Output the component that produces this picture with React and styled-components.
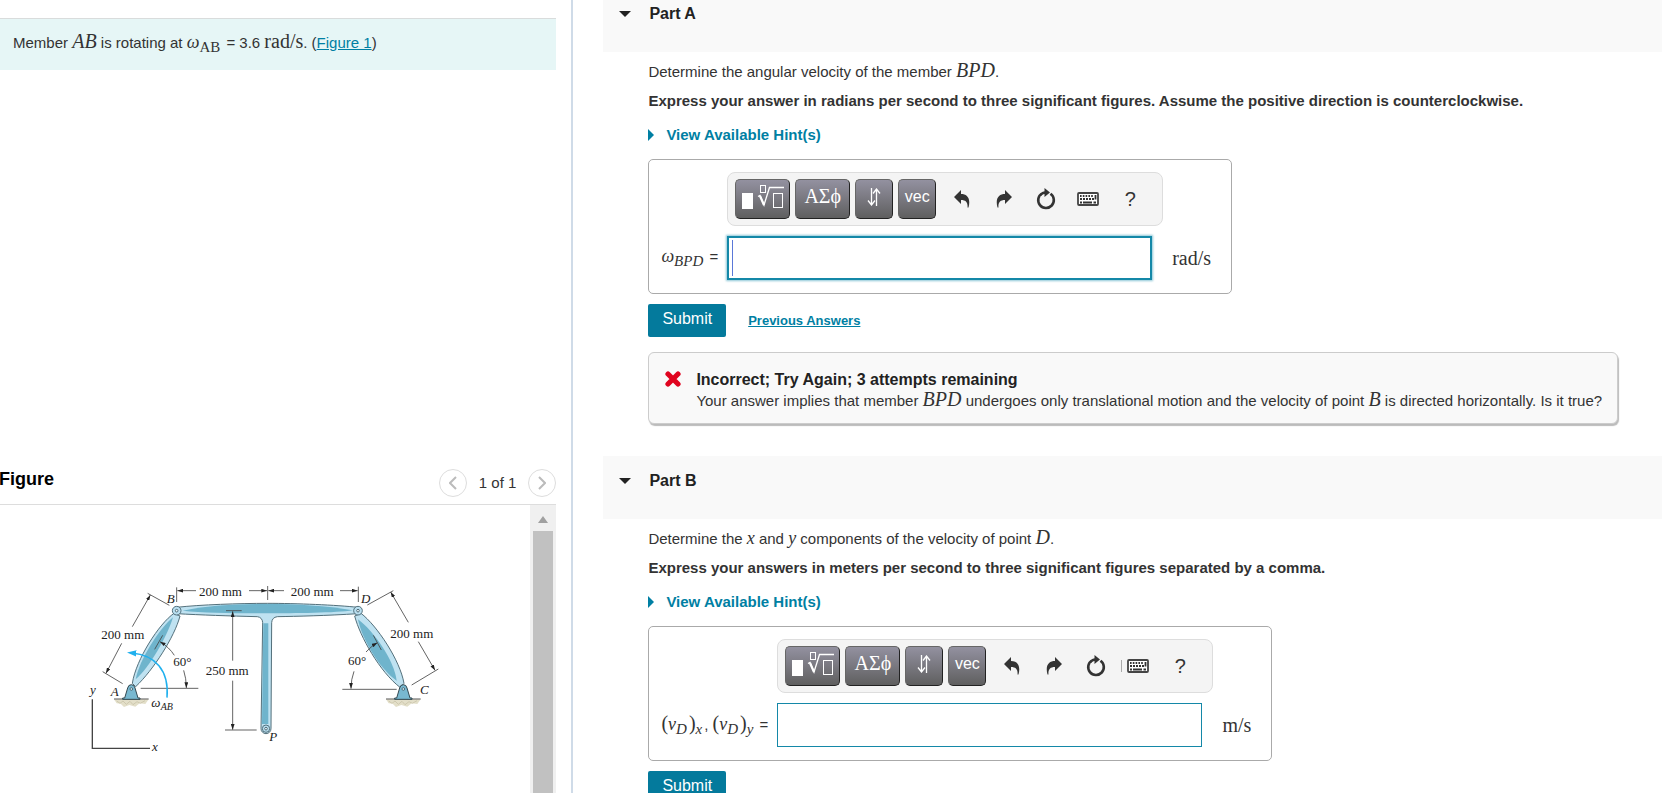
import React, { useState } from "react";
import styled, { createGlobalStyle, css } from "styled-components";

const SANS = `"Liberation Sans", Arial, sans-serif`;
const SERIF = `"Liberation Serif", "Times New Roman", serif`;

const App = () => {
  return (
    <>
      <GlobalStyle />
      <Page>
        <LeftPane>
          <Intro>
            Member <Var>AB</Var> is rotating at <Var $low>ω</Var>
            <Sub $roman>AB</Sub> = 3.6 <Unit>rad/s</Unit>. (
            <a href="#figure">Figure 1</a>)
          </Intro>
          <FigurePanel />
        </LeftPane>
        <RightPane>
          <Part title="Part A">
            <Question>
              Determine the angular velocity of the member <Var>BPD</Var>.
            </Question>
            <Instructions>
              Express your answer in radians per second to three significant
              figures. Assume the positive direction is counterclockwise.
            </Instructions>
            <Hints />
            <Answer
              id="answer-a"
              focused
              unit="rad/s"
              label={
                <>
                  <Var $low>ω</Var>
                  <Sub>BPD</Sub> =
                </>
              }
            />
            <Actions>
              <SubmitButton type="submit">Submit</SubmitButton>
              <PreviousLink href="#previous">Previous Answers</PreviousLink>
            </Actions>
            <Feedback>
              <CrossIcon />
              <div>
                <FeedbackTitle>
                  Incorrect; Try Again; 3 attempts remaining
                </FeedbackTitle>
                <FeedbackText>
                  Your answer implies that member <Var>BPD</Var> undergoes only
                  translational motion and the velocity of point <Var>B</Var> is
                  directed horizontally. Is it true?
                </FeedbackText>
              </div>
            </Feedback>
          </Part>
          <Part title="Part B">
            <Question>
              Determine the <Var $low>x</Var> and <Var $low>y</Var> components
              of the velocity of point <Var>D</Var>.
            </Question>
            <Instructions>
              Express your answers in meters per second to three significant
              figures separated by a comma.
            </Instructions>
            <Hints />
            <Answer
              id="answer-b"
              unit="m/s"
              divider
              label={
                <>
                  <Unit>(</Unit>
                  <Var $low>v</Var>
                  <Sub>D</Sub>
                  <Unit>)</Unit>
                  <Sub>x</Sub>, <Unit>(</Unit>
                  <Var $low>v</Var>
                  <Sub>D</Sub>
                  <Unit>)</Unit>
                  <Sub>y</Sub> =
                </>
              }
            />
            <Actions>
              <SubmitButton type="submit">Submit</SubmitButton>
            </Actions>
          </Part>
        </RightPane>
      </Page>
    </>
  );
};

export default App;

const Part = ({ title, children }) => {
  const [open, setOpen] = useState(true);
  return (
    <section>
      <PartHeader>
        <PartToggle aria-expanded={open} onClick={() => setOpen(!open)}>
          <svg width="12" height="6" viewBox="0 0 12 6" aria-hidden="true">
            <path d="M0 0H12L6 6Z" fill="#222" />
          </svg>
          {title}
        </PartToggle>
      </PartHeader>
      {open && <PartBody>{children}</PartBody>}
    </section>
  );
};

const Hints = () => (
  <HintButton>
    <svg width="6" height="12" viewBox="0 0 6 12" aria-hidden="true">
      <path d="M0 0L6 6L0 12Z" fill="#007fa3" />
    </svg>
    View Available Hint(s)
  </HintButton>
);

const Answer = ({ id, label, unit, focused, divider }) => (
  <AnswerBox>
    <Toolbar>
      <KeyButton aria-label="Templates" $wide>
        <TemplateIcon />
      </KeyButton>
      <KeyButton aria-label="Symbols" $wide $serif>
        ΑΣϕ
      </KeyButton>
      <KeyButton aria-label="Arrows">
        <ArrowsIcon />
      </KeyButton>
      <KeyButton>vec</KeyButton>
      <ToolButton aria-label="Undo">
        <CurvedArrow />
      </ToolButton>
      <ToolButton aria-label="Redo">
        <CurvedArrow flip />
      </ToolButton>
      <ToolButton aria-label="Reset">
        <ResetIcon />
      </ToolButton>
      <ToolButton aria-label="Keyboard shortcuts">
        {divider && <Divider />}
        <KeyboardIcon />
      </ToolButton>
      <ToolButton aria-label="Help">?</ToolButton>
    </Toolbar>
    <AnswerLabel htmlFor={id}>{label}</AnswerLabel>
    <AnswerField $focused={focused}>
      {focused && <Caret />}
      <AnswerInput id={id} type="text" />
    </AnswerField>
    <AnswerUnit>{unit}</AnswerUnit>
  </AnswerBox>
);

const FigurePanel = () => (
  <FigureSection id="figure">
    <FigureHeader>
      <FigureTitle>Figure</FigureTitle>
      <Pager>
        <RoundButton aria-label="Previous figure">
          <svg width="8" height="14" viewBox="0 0 8 14">
            <path d="M7 1L1 7L7 13" fill="none" stroke="#bbb" strokeWidth="2" />
          </svg>
        </RoundButton>
        1 of 1
        <RoundButton aria-label="Next figure">
          <svg width="8" height="14" viewBox="0 0 8 14">
            <path d="M1 1L7 7L1 13" fill="none" stroke="#bbb" strokeWidth="2" />
          </svg>
        </RoundButton>
      </Pager>
    </FigureHeader>
    <FigureScroll>
      <FigureCanvas>
        <Linkage />
      </FigureCanvas>
      <ScrollTrack>
        <svg width="10" height="7" viewBox="0 0 10 7" aria-hidden="true">
          <path d="M0 7L5 0L10 7Z" fill="#a0a0a0" />
        </svg>
        <ScrollThumb />
      </ScrollTrack>
    </FigureScroll>
  </FigureSection>
);

const TemplateIcon = () => (
  <svg width="42" height="26" viewBox="0 0 42 26" aria-hidden="true">
    <rect x="0" y="9" width="11" height="16" fill="#fff" />
    <g fill="none" stroke="#fff">
      <rect x="18.5" y="1.5" width="5" height="7" />
      <path d="M16 12.5L18 11.5L22 21L27.5 3.5H42" strokeWidth="1.3" />
      <path d="M18 12L22 21" strokeWidth="2.2" />
      <rect x="31.5" y="9.5" width="9" height="14" />
    </g>
  </svg>
);

const ArrowsIcon = () => (
  <svg width="16" height="18" viewBox="0 0 16 18" aria-hidden="true">
    <g fill="none" stroke="#fff" strokeWidth="1.3">
      <path d="M5.500 0V17M2 12.5L5.500 17L9 12.5" />
      <path d="M10.500 18V1M7 5.5L10.500 1L14 5.5" />
    </g>
  </svg>
);

const CurvedArrow = ({ flip }) => (
  <svg width="16" height="18" viewBox="0 0 16 18" aria-hidden="true">
    <path
      d="M0 7L7 0V4C13 4 17 8 14.500 17.500H13.500C14 12.500 12 10 7 10V14Z"
      fill="#333"
      transform={flip ? "translate(16 0) scale(-1 1)" : undefined}
    />
  </svg>
);

const ResetIcon = () => (
  <svg width="20" height="22" viewBox="0 0 20 22" aria-hidden="true">
    <path
      d="M6 5.500A7.800 7.800 0 1 0 14.500 5.800"
      fill="none"
      stroke="#333"
      strokeWidth="2.6"
    />
    <path d="M8.500 0L14 4.500L8.500 9V6Q6.500 6 5 8L4 6Q6 3.500 8.500 3.300Z" fill="#333" />
  </svg>
);

const KeyboardIcon = () => (
  <svg width="22" height="14" viewBox="0 0 22 14" aria-hidden="true">
    <rect x="1" y="1" width="20" height="12" rx="1" fill="#fff" stroke="#444" strokeWidth="1.8" />
    <g stroke="#333" strokeWidth="1.8">
      <path d="M3 4H17" strokeDasharray="1.6 1.2" />
      <path d="M3 7H17" strokeDasharray="2 1" />
      <path d="M3 10.500H5M6 10.500H15M16.500 10.500H19M18.500 3V7.500" />
    </g>
  </svg>
);

const CrossIcon = () => (
  <svg width="16" height="16" viewBox="0 0 16 16" aria-label="Incorrect">
    <path d="M3 3L13 13M13 3L3 13" stroke="#e0041f" strokeWidth="5.2" strokeLinecap="round" />
  </svg>
);

const Pin = ({ x, y, r = 11 }) => (
  <g fill="#b9dff0" stroke="#3d5a66" strokeWidth="2.5">
    <circle cx={x} cy={y} r={r} />
    <circle cx={x} cy={y} r="4" fill="#eef8fb" />
  </g>
);

const Support = ({ x }) => (
  <g>
    <path
      d={`M${x - 52} 388H${x + 52}L${x + 42} 402L${x + 25} 400L${x + 12} 410L${x - 6} 405L${x - 22} 411L${x - 32} 401L${x - 44} 400Z`}
      fill="#e3dfc9"
    />
    <path
      d={`M${x - 44} 393l10 7l9 -7l10 10l11 -9l9 10l12 -9l10 5l14 -8`}
      fill="none"
      stroke="#c3bda2"
      strokeWidth="2"
    />
    <path d={`M${x - 52} 387H${x + 52}`} stroke="#555" strokeWidth="3" />
    <path
      d={`M${x - 20} 384L${x - 11} 354Q${x - 9} 344 ${x} 344Q${x + 9} 344 ${x + 11} 354L${x + 20} 384H${x + 26}V388H${x - 26}V384Z`}
      fill="#78b8d0"
      stroke="#334850"
      strokeWidth="3"
    />
    <circle cx={x} cy="357" r="4" fill="#cdeaf4" stroke="#334850" strokeWidth="2" />
  </g>
);

// B-D beam with its P stem, carried by links AB and CD
const Linkage = () => (
  <FigureSvg viewBox="0 0 1110 570" role="img" aria-label="Linkage diagram">
    <defs>
      <marker id="tip" viewBox="0 0 12 8" refX="12" refY="4" markerWidth="17" markerHeight="12" markerUnits="userSpaceOnUse" orient="auto">
        <path d="M0 0L12 4L0 8Z" fill="#222" />
      </marker>
      <marker id="blueTip" viewBox="0 0 12 8" refX="6" refY="4" markerWidth="28" markerHeight="19" markerUnits="userSpaceOnUse" orient="auto">
        <path d="M0 0L12 4L0 8Z" fill="#1fb0ee" />
      </marker>
    </defs>

    <Member d="M157 340C168 268 238 160 282 130L300 138C284 200 220 300 167 350Z" />
    <Core d="M167 328C178 270 236 178 279 142C262 200 206 296 167 328Z" />
    <Member d="M824 138C840 200 900 306 960 352L972 340C960 270 890 166 843 130Z" />
    <Core d="M834 148C844 204 900 300 950 332C942 270 882 184 834 148Z" />
    <Member d="M290 112C360 104 480 100 562 100C650 100 770 105 834 112V131C740 137 650 139 592 140Q576 142 575 158L573 476A15 15 0 0 1 543 476L548 158Q547 142 532 140C450 138 360 135 290 131Z" />
    <Core d="M308 122C390 105 480 102 562 102C650 102 740 107 818 121C770 129 640 130 562 130C480 130 370 129 308 122Z" />
    <Core d="M550 160H565V462H546Z" />
    <Support x={154} />
    <Support x={970} />
    <Pin x={290} y={122} r={13} />
    <Pin x={834} y={122} r={13} />
    <Pin x={558} y={476} />

    <Thin d="M290 52V96M563 48V90M835 50V96M203 70L268 106M68 305L128 341M182 355H355" />
    <Thin d="M438 122H485M435 480H530M248 196L224 238M862 105L940 62M995 345L1075 297M787 358H950M880 196L904 240" />
    <Arrow d="M348 62H292" />
    <Arrow d="M507 62H561" />
    <Arrow d="M612 62H565" />
    <Arrow d="M780 62H833" />
    <Arrow d="M157 170L211 75" />
    <Arrow d="M125 220L78 310" />
    <Arrow d="M283 256Q268 232 240 215" />
    <Arrow d="M311 301Q319 325 319 354" />
    <Arrow d="M458 272V124" />
    <Arrow d="M458 332V479" />
    <Arrow d="M985 157L932 66" />
    <Arrow d="M1015 215L1065 301" />
    <Arrow d="M858 246Q872 230 892 218" />
    <Arrow d="M822 304Q813 328 813 356" />
    <path d="M261 383C268 300 225 255 155 249" fill="none" stroke="#1fb0ee" strokeWidth="4.5" markerEnd="url(#blueTip)" />
    <path d="M37 388V535H210" fill="none" stroke="#444" strokeWidth="4" />

    <Dim x="357" y="77">200 mm</Dim>
    <Dim x="632" y="77">200 mm</Dim>
    <Dim x="64" y="207">200 mm</Dim>
    <Dim x="931" y="205">200 mm</Dim>
    <Dim x="377" y="315">250 mm</Dim>
    <Dim x="280" y="287">60°</Dim>
    <Dim x="804" y="285">60°</Dim>
    <Dim $italic x="92" y="379">A</Dim>
    <Dim $italic x="260" y="98">B</Dim>
    <Dim $italic x="1020" y="373">C</Dim>
    <Dim $italic x="843" y="98">D</Dim>
    <Dim $italic x="568" y="514">P</Dim>
    <Dim $italic x="30" y="372">y</Dim>
    <Dim $italic x="216" y="544">x</Dim>
    <Dim $italic x="214" y="412">ω</Dim>
    <Dim $italic $small x="242" y="420">AB</Dim>
  </FigureSvg>
);

const GlobalStyle = createGlobalStyle`
  * {
    box-sizing: border-box;
  }
  body {
    margin: 0;
    background: #fff;
    color: #333;
    font-family: ${SANS};
    font-size: 15px;
  }
  a {
    color: #007fa3;
  }
  button {
    font-family: inherit;
    cursor: pointer;
  }
  svg {
    display: block;
    flex-shrink: 0;
  }
`;

const Page = styled.main`
  display: flex;
  height: 100vh;
  overflow: hidden;
`;

const LeftPane = styled.div`
  display: flex;
  flex: 0 0 34.5%;
  flex-direction: column;
  justify-content: space-between;
  padding: 18px 15px 0 0;
  border-right: 2px solid #cfdbe8;
`;

const RightPane = styled.div`
  flex: 1;
  min-width: 0;
  margin-top: -11px;
  padding-left: 30px;
`;

const Intro = styled.p`
  margin: 0;
  height: 52px;
  padding: 0 13px;
  border-top: 1px solid #d9dcdc;
  background: #e6f6f6;
  line-height: 48px;
`;

const Var = styled.i`
  font-family: ${SERIF};
  font-size: ${({ $low }) => ($low ? 18 : 20)}px;
  line-height: 1;
`;

const Unit = styled.span`
  font-family: ${SERIF};
  font-size: 20px;
  line-height: 1;
`;

const Sub = styled.sub`
  padding-right: 2px;
  font-family: ${SERIF};
  font-size: 15px;
  font-style: ${({ $roman }) => ($roman ? "normal" : "italic")};
  line-height: 1;
`;

const PartHeader = styled.h2`
  margin: 0;
  height: 63px;
  padding: 16px;
  background: #f9f9f9;
`;

const PartToggle = styled.button`
  display: flex;
  align-items: center;
  gap: 18px;
  padding: 0;
  border: 0;
  background: none;
  color: #222;
  font-size: 16px;
  font-weight: bold;
  line-height: 18px;
`;

const PartBody = styled.div`
  padding: 8px 16px 32px 45px;
`;

const Question = styled.p`
  margin: 0;
  line-height: 24px;
`;

const Instructions = styled.p`
  margin: 5px 0 8px;
  font-weight: bold;
  line-height: 24px;
`;

const HintButton = styled.button`
  display: flex;
  align-items: center;
  gap: 12px;
  margin-bottom: 10px;
  padding: 4px 0;
  border: 0;
  background: none;
  color: #007fa3;
  font-size: 15px;
  font-weight: bold;
  line-height: 20px;
`;

const AnswerBox = styled.div`
  display: inline-grid;
  grid-template-columns: auto auto auto;
  align-content: start;
  align-items: center;
  row-gap: 10px;
  height: 135px;
  padding: 12px 20px 12px 12px;
  border: 1px solid #aaa;
  border-radius: 5px;
`;

const Toolbar = styled.div`
  display: flex;
  grid-column: 2 / 4;
  justify-self: start;
  width: 436px;
  height: 54px;
  padding: 6px 7px;
  border: 1px solid #ddd;
  border-radius: 8px;
  background: #f4f4f4;
`;

const KeyButton = styled.button`
  display: flex;
  flex-shrink: 0;
  align-items: center;
  justify-content: center;
  width: ${({ $wide }) => ($wide ? 55 : 38)}px;
  height: 40px;
  margin-right: 5px;
  padding: 0 0 5px;
  border: 1px solid;
  border-color: #666 #222 #222 #666;
  border-radius: 5px;
  background: linear-gradient(#9391a0, #5f5f5f);
  color: #fff;
  font-size: 16px;
  ${({ $serif }) =>
    $serif &&
    css`
      font-family: ${SERIF};
      font-size: 20px;
    `}
`;

const ToolButton = styled.button`
  position: relative;
  display: flex;
  align-items: center;
  justify-content: center;
  width: 42px;
  height: 40px;
  padding: 0;
  border: 0;
  background: none;
  color: #333;
  font-size: 20px;
`;

const Divider = styled.span`
  position: absolute;
  left: 4px;
  width: 1px;
  height: 12px;
  background: #aaa;
`;

const AnswerLabel = styled.label`
  padding-right: 9px;
  white-space: nowrap;
`;

const AnswerField = styled.div`
  position: relative;
  width: 425px;
  height: 44px;
  border: ${({ $focused }) => ($focused ? 2 : 1)}px solid #1488a8;
  box-shadow: ${({ $focused }) => ($focused ? "0 0 2px 1px #8cc6d6" : "none")};
`;

const AnswerInput = styled.input`
  width: 100%;
  height: 100%;
  padding: 0 8px;
  border: 0;
  outline: 0;
  background: transparent;
  font-size: 18px;
`;

const Caret = styled.span`
  position: absolute;
  top: 2px;
  bottom: 2px;
  left: 3px;
  width: 1px;
  background: #5a78d8;
`;

const AnswerUnit = styled.span`
  padding-left: 20px;
  font-family: ${SERIF};
  font-size: 20px;
`;

const Actions = styled.div`
  display: flex;
  align-items: center;
  gap: 22px;
  margin-top: 10px;
`;

const SubmitButton = styled.button`
  height: 33px;
  padding: 0 14px 4px;
  border: 0;
  border-radius: 2px;
  background: #047a9c;
  color: #fff;
  font-size: 16px;
`;

const PreviousLink = styled.a`
  font-size: 13px;
  font-weight: bold;
`;

const Feedback = styled.div`
  display: flex;
  gap: 15px;
  width: fit-content;
  height: 72px;
  margin-top: 15px;
  padding: 18px 15px 0 16px;
  border: 1px solid #ccc;
  border-radius: 6px;
  box-shadow: 1px 2px 1px #bbb;
  background: #f9f9f9;
`;

const FeedbackTitle = styled.h3`
  margin: 0;
  color: #222;
  font-size: 16px;
  line-height: 18px;
`;

const FeedbackText = styled.p`
  margin: 0;
  line-height: 16px;
`;

const FigureSection = styled.section`
  display: flex;
  flex: 0 0 332px;
  flex-direction: column;
`;

const FigureHeader = styled.header`
  display: flex;
  align-items: center;
  justify-content: space-between;
  height: 44px;
  border-bottom: 1px solid #ddd;
`;

const FigureTitle = styled.h2`
  margin: 0 0 6px -1px;
  color: #000;
  font-size: 18px;
`;

const Pager = styled.div`
  display: flex;
  align-items: center;
  gap: 12px;
  font-size: 15px;
`;

const RoundButton = styled.button`
  display: flex;
  align-items: center;
  justify-content: center;
  width: 28px;
  height: 28px;
  padding: 0;
  border: 1px solid #ddd;
  border-radius: 50%;
  background: #fff;
`;

const FigureScroll = styled.div`
  display: flex;
  flex: 1;
  min-height: 0;
`;

const FigureCanvas = styled.div`
  flex: 1;
  padding: 65px 0 0 80px;
`;

const FigureSvg = styled.svg`
  width: 370px;
  height: 190px;
`;

const ScrollTrack = styled.div`
  display: flex;
  flex-direction: column;
  align-items: center;
  gap: 8px;
  width: 26px;
  padding-top: 11px;
  background: #f0f0f0;
`;

const ScrollThumb = styled.div`
  flex: 1;
  width: 20px;
  background: #c1c1c1;
`;

const Member = styled.path`
  fill: #bfe2f1;
  stroke: #54707b;
  stroke-width: 3;
`;

const Core = styled.path`
  fill: #6fb4cc;
`;

const Thin = styled.path`
  fill: none;
  stroke: #444;
  stroke-width: 2.5;
`;

const Arrow = styled(Thin).attrs({ markerEnd: "url(#tip)" })``;

const Dim = styled.text`
  fill: #222;
  font-family: ${SERIF};
  font-size: ${({ $small }) => ($small ? 30 : 39)}px;
  font-style: ${({ $italic }) => ($italic ? "italic" : "normal")};
`;
